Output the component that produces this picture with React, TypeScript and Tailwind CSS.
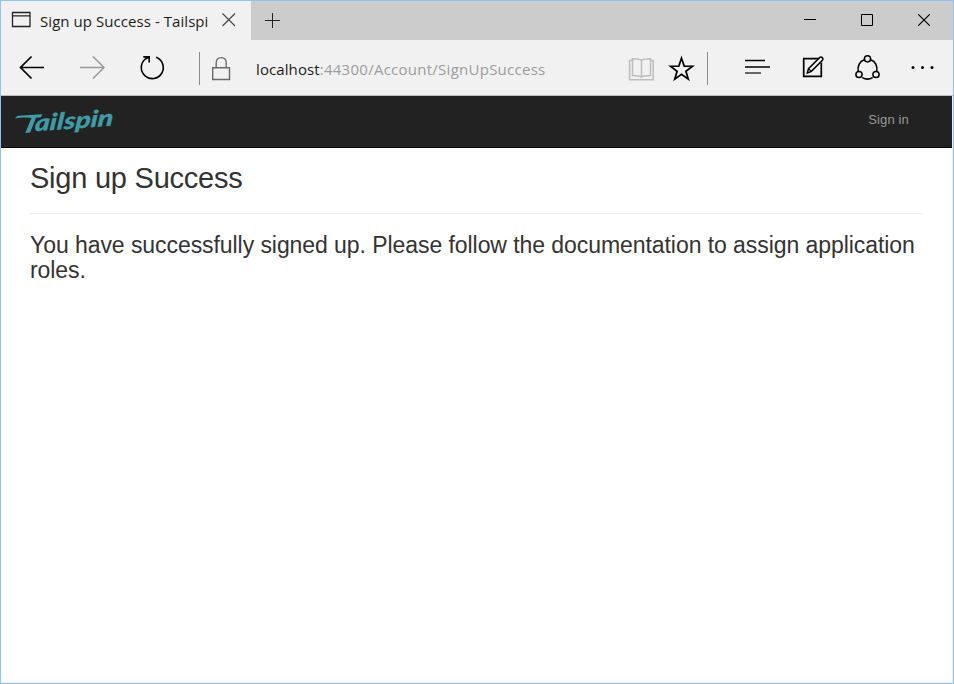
import React from "react";

type GlyphProps = {
  box: string;
  className: string;
  label: string;
  children: React.ReactNode;
};

function Glyph({ box, className, label, children }: GlyphProps) {
  return (
    <button aria-label={label} className={`block shrink-0 ${className}`}>
      <svg viewBox={box} className="block h-full w-full" fill="none" stroke="currentColor">
        {children}
      </svg>
    </button>
  );
}

function TitleBar() {
  return (
    <div className="flex h-[39px] bg-[#cccccc]">
      <div className="flex w-[250px] bg-[#f1f1f1] text-black">
        <svg viewBox="1 1 39 39" className="block w-[39px] shrink-0" fill="none" stroke="#222">
          <path d="M12.5 12.5h17.5v14h-17.5zM12.5 15.9h17.5" strokeWidth="1.3" />
        </svg>
        <span className="w-[172px] overflow-hidden whitespace-nowrap pt-[9px] font-['Open_Sans','Noto_Sans',sans-serif] text-[15px] leading-[22px] tracking-[0.06px] text-[#1c1c1c]">
          Sign up Success - Tailspi
        </span>
        <Glyph label="Close tab" box="212 1 39 39" className="w-[39px] text-[#444]">
          <path d="M222.5 13.5l12.5 12.5M235 13.5l-12.5 12.5" strokeWidth="1.1" />
        </Glyph>
      </div>
      <Glyph label="New tab" box="251 1 44 39" className="w-[44px] text-[#222]">
        <path d="M265 20.5h15M272.5 13v15" />
      </Glyph>
      <div className="grow" />
      <Glyph label="Minimize" box="781 1 57 39" className="w-[57px] text-black">
        <path d="M804 19.5h12" />
      </Glyph>
      <Glyph label="Maximize" box="838 1 57 39" className="w-[57px] text-black">
        <path d="M861.5 14.5h11v11h-11z" />
      </Glyph>
      <Glyph label="Close" box="895 1 58 39" className="w-[58px] text-black">
        <path d="M918.3 14.3l11.4 11.4M929.7 14.3l-11.4 11.4" strokeWidth="1.2" />
      </Glyph>
    </div>
  );
}

function Toolbar() {
  return (
    <div className="flex h-[56px] border-b border-[#bdbdbd] bg-[#f1f1f1] text-black">
      <Glyph label="Back" box="1 40 60 55" className="w-[60px]">
        <path d="M44 67.5H20.5M31.5 56.5l-11 11 11 11" strokeWidth="1.7" />
      </Glyph>
      <Glyph label="Forward" box="61 40 60 55" className="w-[60px] text-[#999]">
        <path d="M80 67.5h24M93 56.5l11 11-11 11" strokeWidth="1.5" />
      </Glyph>
      <Glyph label="Refresh" box="121 40 78 55" className="w-[78px]">
        <path d="M156.2 57.3a11 11 0 1 1-10.8 1.7l3.5-2M143.3 56.9h5.9v5.6" strokeWidth="1.6" />
      </Glyph>
      <div className="mt-3 h-[33px] w-px bg-[#8c8c8c]" />
      <svg viewBox="200 40 56 55" className="block w-[56px] shrink-0" fill="none" stroke="#6b6b6b" strokeWidth="1.4">
        <path d="M212.7 67.7h16.8v11.8h-16.8zM216.2 67.5v-4.6c0-3 1.8-5.3 5-5.3s5 2.3 5 5.3v4.6" />
      </svg>
      <div className="w-[364px] whitespace-nowrap pt-[18px] font-['Open_Sans','Noto_Sans',sans-serif] text-[15px] leading-[22px] tracking-[0.26px] text-[#9c9c9c]">
        <span className="tracking-[0.1px] text-[#1c1c1c]">localhost</span>:44300/Account/SignUpSuccess
      </div>
      <Glyph label="Reading view" box="620 40 44 55" className="w-[44px] text-[#bdbdbd]">
        <path
          d="M632 60.5h-2.4v19.2h23.6V60.5h-2.4M641.5 77.2c-2-1.5-5-1.7-9-1.7V58.8c4 0 7 .1 9 1.6 2-1.5 5-1.6 9-1.6v16.7c-4 0-7 .2-9 1.7zM641.5 60v17"
          strokeWidth="1.5"
        />
      </Glyph>
      <Glyph label="Favorite" box="664 40 43 55" className="w-[43px]">
        <path
          d="M681.5 58.2l2.7 7.9 8.3.1-6.6 5 2.4 8-6.8-4.8-6.8 4.8 2.4-8-6.6-5 8.3-.1z"
          strokeWidth="1.7"
        />
      </Glyph>
      <div className="mt-3 h-[33px] w-px bg-[#8c8c8c]" />
      <Glyph label="Hub" box="708 40 78 55" className="w-[78px]">
        <path d="M745 60.5h20M745 67h25" strokeWidth="1.5" />
        <path d="M745 73h16" stroke="#444" strokeWidth="1.6" />
      </Glyph>
      <Glyph label="Make a web note" box="786 40 54 55" className="w-[54px]">
        <path d="M818.5 58.7h-14.8v17.6h17.6V62.5" strokeWidth="1.7" />
        <path d="M807.3 73l1.2-4.4 11.3-11.2c1.8-1.2 4 .8 2.8 2.7l-11.2 11.3z" strokeWidth="1.5" fill="#f1f1f1" />
        <path d="M808.7 68.9l2.5 2.4" strokeWidth="1.2" />
      </Glyph>
      <Glyph label="Share" box="840 40 55 55" className="w-[55px]">
        <circle cx="867.5" cy="58.8" r="3.1" strokeWidth="1.5" />
        <circle cx="859" cy="74.5" r="3.1" strokeWidth="1.5" />
        <circle cx="876" cy="74.5" r="3.1" strokeWidth="1.5" />
        <path d="M864.3 59.8c-4.6 1.6-7 6.3-6.1 11.4M870.7 59.8c4.6 1.6 7 6.3 6.1 11.4M862.3 77.6c3.3 2 7.1 2 10.4 0" strokeWidth="1.6" />
      </Glyph>
      <Glyph label="More" box="895 40 58 55" className="w-[58px]">
        <g fill="currentColor" stroke="none">
          <circle cx="913" cy="67.5" r="1.5" />
          <circle cx="922.5" cy="67.5" r="1.5" />
          <circle cx="932" cy="67.5" r="1.5" />
        </g>
      </Glyph>
    </div>
  );
}

function TailspinLogo() {
  return (
    <svg viewBox="1 96 124 51" className="block w-[124px]" fill="#3f9ba6">
      <path d="M15 118.4l2.5-2.6 24.8-1.6-1.3 3-5 .5-5.8 14.7-5 .5 1.2-2.6 5.1-12.3c-4.5-.9-9.5-.6-16.5.4z" />
      <g transform="translate(34.5 131.2) rotate(-4) skewX(-9)">
        <text
          x="0"
          y="0"
          textLength="78.5"
          lengthAdjust="spacingAndGlyphs"
          fontFamily="Lato, sans-serif"
          fontWeight="900"
          fontStyle="italic"
          fontSize="23"
          stroke="#3f9ba6"
          strokeWidth="0.3"
        >
          ailspin
        </text>
      </g>
    </svg>
  );
}

export default function App() {
  return (
    <div className="flex h-[684px] w-[954px] flex-col border border-[#8cc5f5] bg-white">
      <TitleBar />
      <Toolbar />
      <div className="flex grow flex-col border-b border-r border-[#eeeeee] font-['Liberation_Sans',Arial,sans-serif] text-[#333]">
        <nav className="flex h-[52px] justify-between border-b border-[#080808] bg-[#222]">
          <TailspinLogo />
          <a className="mr-[43px] mt-[14px] text-[13px] leading-5 tracking-[0.15px] text-[#999]">Sign in</a>
        </nav>
        <main className="px-[29px]">
          <h2 className="mt-[14px] text-[29px] leading-8 tracking-[-0.23px]">Sign up Success</h2>
          <hr className="mt-[19px] border-[#eeeeee]" />
          <h3 className="mt-[19px] text-[23px] leading-[25px] tracking-[-0.065px]">
            You have successfully signed up. Please follow the documentation to assign application roles.
          </h3>
        </main>
      </div>
    </div>
  );
}
